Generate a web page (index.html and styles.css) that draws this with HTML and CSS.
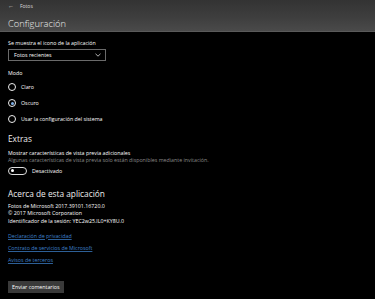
FILE: index.html
```html
<!DOCTYPE html>
<html lang="es">
<head>
    <meta charset="UTF-8">
    <meta name="viewport" content="width=device-width, initial-scale=1.0">
    <title>Configuración</title>
    <link rel="stylesheet" href="styles.css">
</head>
<body>
    <div class="header">
        <div class="titlebar">
            <span class="back">&#8592;</span>
            <span class="app-name">Fotos</span>
        </div>
        <h1>Configuración</h1>
    </div>

    <div class="content">
        <div class="label">Se muestra el icono de la aplicación</div>
        <div class="dropdown">
            <span>Fotos recientes</span>
            <svg class="chevron" width="6" height="4" viewBox="0 0 6 4">
                <path d="M0.5 0.8 L3 3.2 L5.5 0.8" fill="none" stroke="#ddd" stroke-width="0.8"/>
            </svg>
        </div>

        <div class="label mode">Modo</div>
        <div class="radio-row"><span class="radio"></span>Claro</div>
        <div class="radio-row"><span class="radio checked"></span>Oscuro</div>
        <div class="radio-row"><span class="radio"></span>Usar la configuración del sistema</div>

        <h2 class="extras">Extras</h2>
        <div class="small-line first">Mostrar características de vista previa adicionales</div>
        <div class="small-line muted">Algunas características de vista previa solo están disponibles mediante invitación.</div>
        <div class="toggle-row"><span class="toggle"></span>Desactivado</div>

        <h2 class="about">Acerca de esta aplicación</h2>
        <div class="info first">Fotos de Microsoft 2017.39101.16720.0</div>
        <div class="info">© 2017 Microsoft Corporation</div>
        <div class="info">Identificador de la sesión: YEC2w25.lL0+KY8U.0</div>

        <div class="links">
            <a href="#">Declaración de privacidad</a>
            <a href="#">Contrato de servicios de Microsoft</a>
            <a href="#">Avisos de terceros</a>
        </div>

        <button type="button">Enviar comentarios</button>
    </div>
</body>
</html>
```

FILE: styles.css
```css
body {
    margin: 0;
    background-color: #000;
    color: #fff;
    font-family: 'Open Sans', 'Noto Sans', sans-serif;
    font-size: 5.3px;
    overflow: hidden;
}

.header {
    height: 31px;
    border-bottom: 1px solid #5a5a5a;
    background: linear-gradient(180deg, #333 0%, #3f3f3f 60%, #4a4a4a 100%);
    padding: 0 8px;
}

.titlebar {
    height: 12px;
    line-height: 12px;
    display: flex;
    align-items: center;
    color: #ddd;
    font-size: 5px;
}

.back {
    width: 12px;
    font-size: 6px;
}

h1 {
    margin: 4px 0 0;
    height: 15px;
    line-height: 15px;
    font-size: 9.3px;
    font-weight: 300;
    color: #eee;
}

.content {
    padding: 0 8px;
}

.label {
    margin-top: 6px;
    line-height: 10px;
}

.label.mode {
    margin-top: 7px;
}

.dropdown {
    margin-top: 1px;
    width: 98px;
    height: 12px;
    box-sizing: border-box;
    border: 1px solid #6a6a6a;
    display: flex;
    align-items: center;
    justify-content: space-between;
    padding: 0 4px 0 5px;
}

.label.mode + .radio-row {
    margin-top: 1px;
}

.radio-row {
    height: 16px;
    display: flex;
    align-items: center;
}

.radio {
    width: 6px;
    height: 6px;
    border: 1px solid #eee;
    border-radius: 50%;
    margin-right: 5px;
    display: flex;
    align-items: center;
    justify-content: center;
}

.radio.checked::after {
    content: '';
    width: 3px;
    height: 3px;
    border-radius: 50%;
    background-color: #7fb0e8;
}

h2 {
    margin: 0;
    font-weight: 400;
    color: #eee;
}

.extras {
    margin-top: 6px;
    line-height: 12px;
    font-size: 8.3px;
}

.small-line {
    line-height: 7px;
}

.small-line.first {
    margin-top: 5px;
}

.muted {
    color: #8a8a8a;
    white-space: nowrap;
}

.toggle-row {
    margin-top: 2px;
    height: 9px;
    display: flex;
    align-items: center;
}

.toggle {
    width: 15px;
    height: 6px;
    border: 1px solid #ddd;
    border-radius: 4px;
    margin-right: 5px;
    display: flex;
    align-items: center;
    padding-left: 2px;
}

.toggle::before {
    content: '';
    width: 3px;
    height: 3px;
    border-radius: 50%;
    background-color: #fff;
}

.about {
    margin-top: 12px;
    line-height: 13px;
    font-size: 8.3px;
}

.info {
    line-height: 7.5px;
}

.info.first {
    margin-top: 2.5px;
}

.links {
    margin-top: 4.5px;
    display: flex;
    flex-direction: column;
    align-items: flex-start;
}

.links a {
    line-height: 12px;
    color: #3f82cc;
    text-decoration: underline;
    text-decoration-color: #2d5f96;
}

button {
    margin-top: 15.5px;
    height: 12px;
    padding: 0 4px;
    background-color: #3a3a3a;
    color: #fff;
    border: none;
    font-family: inherit;
    font-size: 5.3px;
    cursor: pointer;
}
```
